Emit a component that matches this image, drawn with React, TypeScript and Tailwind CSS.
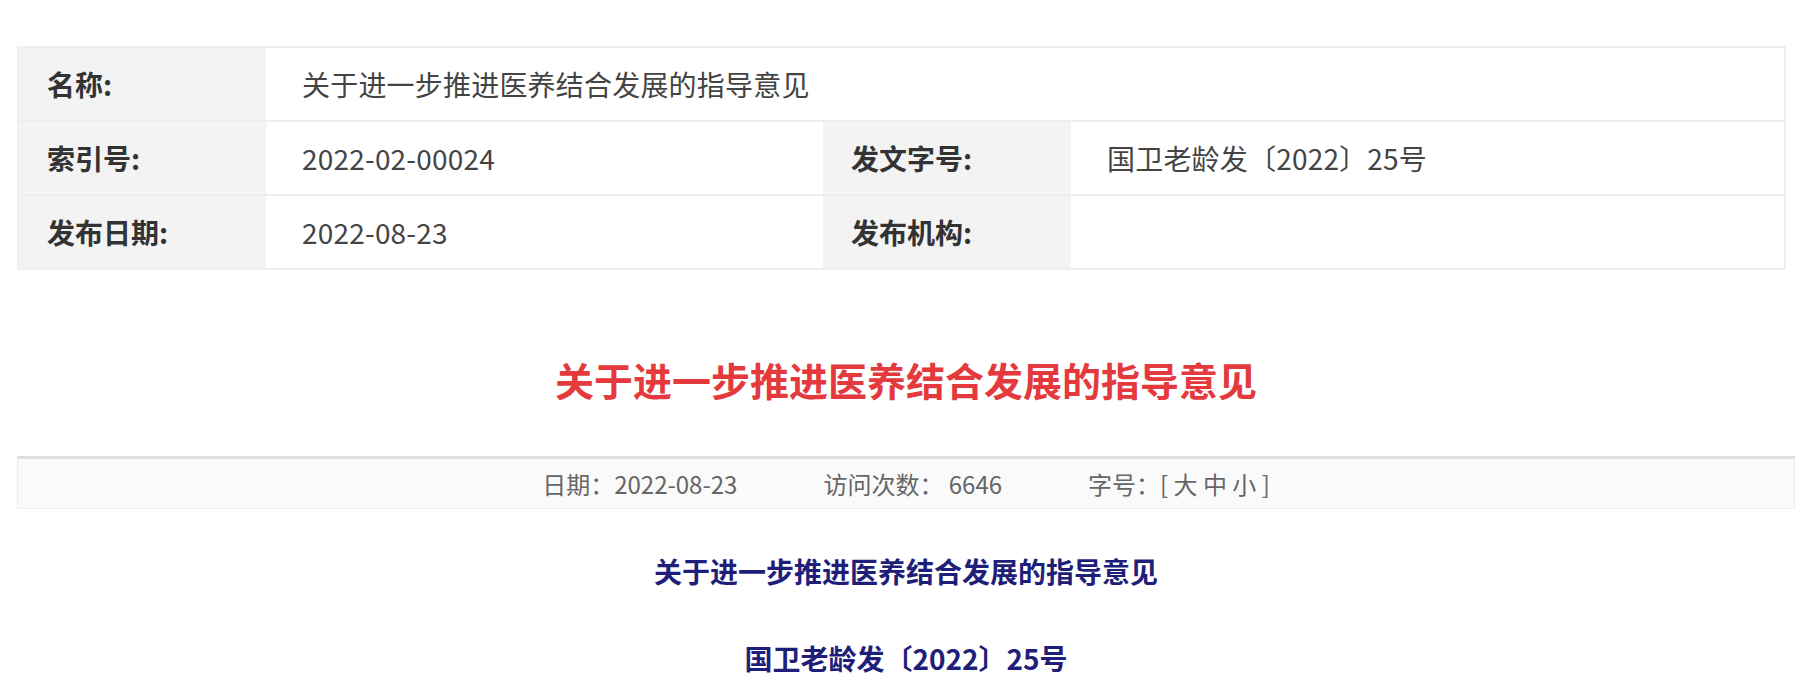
import React from "react";

const font = { fontFamily: '"Noto Sans CJK SC", "Noto Sans", sans-serif' };

function Label({ children }: { children: React.ReactNode }) {
  return (
    <div className="bg-[#f3f3f3] pl-[28px] flex items-center font-bold text-[#333] text-[28px] leading-none">
      {children}
    </div>
  );
}

function Value({ children, className = "" }: { children?: React.ReactNode; className?: string }) {
  return (
    <div className={"bg-white pl-[36px] flex items-center text-[#444] text-[28px] leading-none tracking-[0.2px] " + className}>
      {children}
    </div>
  );
}

export default function App() {
  return (
    <div className="min-h-[686px] bg-white pt-[46px] pl-[17px] pr-[14px]" style={font}>
      <div className="w-[1769px] border-2 border-[#efefef] bg-[#eeeeee]">
        <div className="grid grid-cols-[247px_557px_248px_1fr] grid-rows-[72px_72px_72px] gap-y-[2px]">
          <Label>名称:</Label>
          <Value className="col-span-3">关于进一步推进医养结合发展的指导意见</Value>
          <Label>索引号:</Label>
          <Value>2022-02-00024</Value>
          <Label>发文字号:</Label>
          <Value>国卫老龄发〔2022〕25号</Value>
          <Label>发布日期:</Label>
          <Value>2022-08-23</Value>
          <Label>发布机构:</Label>
          <Value></Value>
        </div>
      </div>

      <h1 className="mt-[84px] text-center text-[39px] leading-[50px] font-bold text-[#e43a3d]">
        关于进一步推进医养结合发展的指导意见
      </h1>

      <div className="mt-[52px] h-[53px] border border-[#eeeeee] border-t-[3px] border-t-[#e0e0e0] bg-[#fafafa] flex items-center justify-center text-[24px] text-[#666] leading-none">
        <span>日期：2022-08-23</span>
        <span className="ml-[86px]">访问次数： 6646</span>
        <span className="ml-[86px]">字号：[ 大 中 小 ]</span>
      </div>

      <p className="mt-[42px] text-center text-[28px] leading-[40px] font-bold text-[#1f1f7a]">
        关于进一步推进医养结合发展的指导意见
      </p>
      <p className="mt-[47px] text-center text-[28px] leading-[40px] font-bold text-[#1f1f7a]">
        国卫老龄发〔2022〕25号
      </p>
    </div>
  );
}
